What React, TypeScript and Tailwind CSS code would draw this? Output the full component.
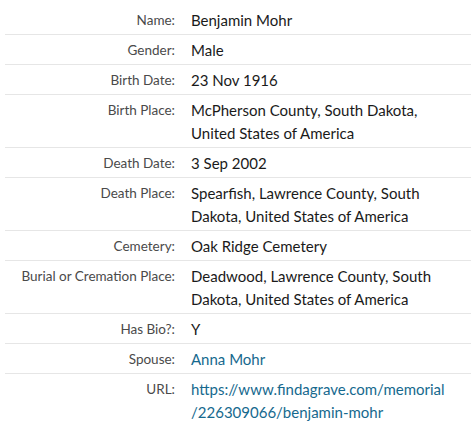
import React from "react";

type Row = { label: string; value: React.ReactNode; link?: boolean };

const rows: Row[] = [
  { label: "Name:", value: "Benjamin Mohr" },
  { label: "Gender:", value: "Male" },
  { label: "Birth Date:", value: "23 Nov 1916" },
  { label: "Birth Place:", value: "McPherson County, South Dakota, United States of America" },
  { label: "Death Date:", value: "3 Sep 2002" },
  { label: "Death Place:", value: "Spearfish, Lawrence County, South Dakota, United States of America" },
  { label: "Cemetery:", value: "Oak Ridge Cemetery" },
  { label: "Burial or Cremation Place:", value: "Deadwood, Lawrence County, South Dakota, United States of America" },
  { label: "Has Bio?:", value: "Y" },
  { label: "Spouse:", value: "Anna Mohr", link: true },
  {
    label: "URL:",
    value: (
      <>
        https://www.findagrave.com/memorial
        <wbr />
        /226309066/benjamin-mohr
      </>
    ),
    link: true,
  },
];

export default function App() {
  return (
    <div className="w-[475px] h-[435px] bg-white pt-[5px] pl-[5px] font-['Lato','Liberation_Sans',sans-serif] text-[15px] leading-[23px]">
      <div className="w-[466px]">
        {rows.map((row, idx) => (
          <div
            key={row.label}
            className={`flex items-start pt-1 pb-[2px] ${idx < rows.length - 1 ? "border-b border-[#e6e6e6]" : ""}`}
          >
            <div className="w-[170px] shrink-0 text-right whitespace-nowrap text-[13.5px] text-[#4a4a4a]">
              {row.label}
            </div>
            <div
              className={`pl-4 pr-2 flex-1 ${row.link ? "text-[#16698e]" : "text-[#1a1a1a]"}`}
            >
              {row.value}
            </div>
          </div>
        ))}
      </div>
    </div>
  );
}
